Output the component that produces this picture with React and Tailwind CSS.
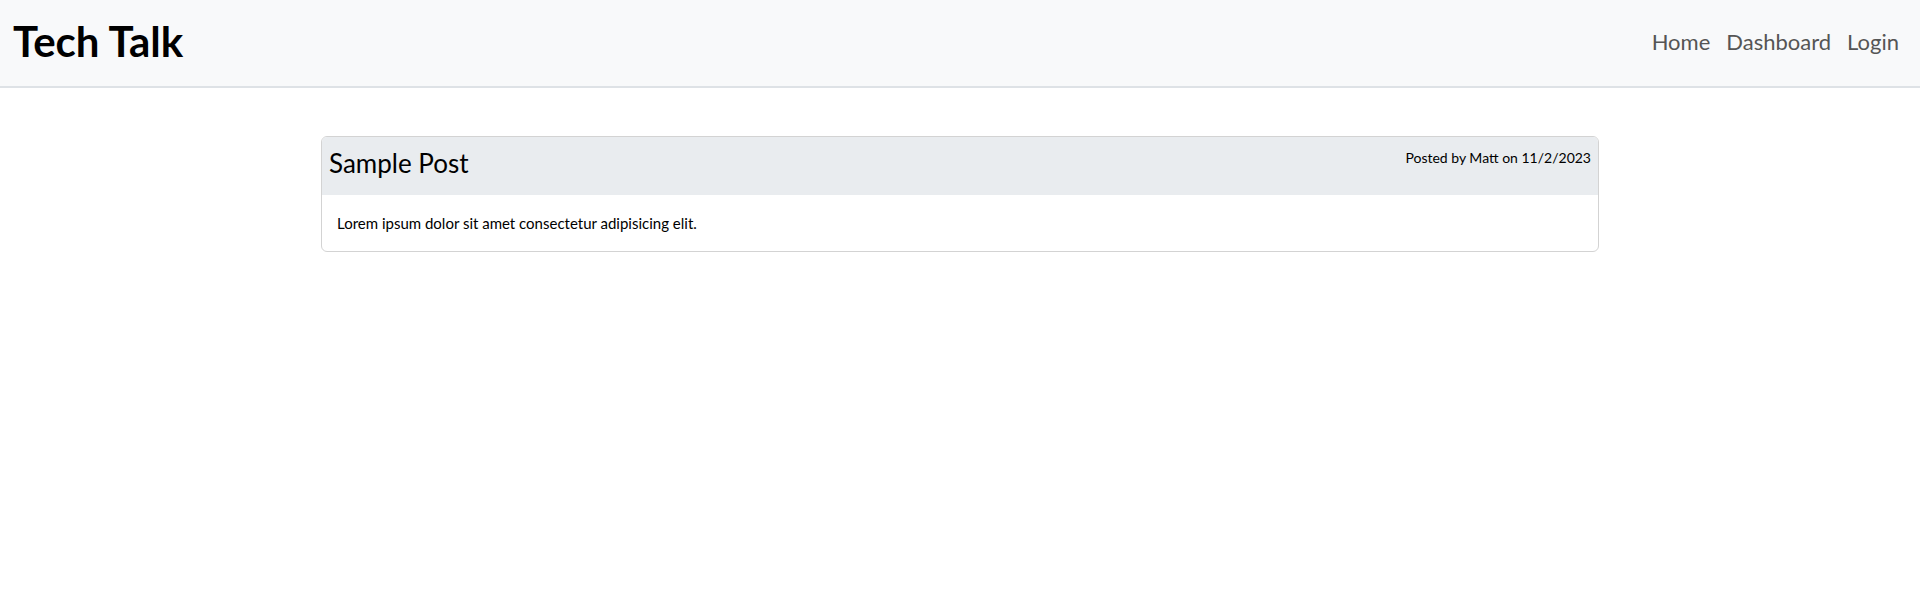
export default function App() {
  const font = { fontFamily: '"Gill Sans", Lato, "Open Sans", sans-serif' };
  return (
    <div className="min-h-[600px] bg-white" style={font}>
      <header className="h-[88px] bg-[#f8f9fa] border-b-2 border-[#dee2e6] flex items-center justify-between pl-[13px] pr-[21px]">
        <h1 className="text-[42px] font-bold text-black leading-none pb-[4px]">Tech Talk</h1>
        <nav className="flex items-center gap-[16px] text-[22px] text-[#555] leading-none pb-[2px]">
          <a>Home</a>
          <a>Dashboard</a>
          <a>Login</a>
        </nav>
      </header>
      <main className="flex justify-center pt-[48px]">
        <div className="w-[1278px] border border-[#d3d3d3] rounded-[6px] overflow-hidden">
          <div className="h-[58px] bg-[#e9ecef] flex justify-between items-start px-[7px]">
            <h2 className="text-[26px] text-black leading-none pt-[13px]">Sample Post</h2>
            <span className="text-[14px] text-black leading-none pt-[14px]">Posted by Matt on 11/2/2023</span>
          </div>
          <div className="h-[56px] flex items-center px-[15px]">
            <p className="text-[15px] text-black leading-none">Lorem ipsum dolor sit amet consectetur adipisicing elit.</p>
          </div>
        </div>
      </main>
    </div>
  );
}
